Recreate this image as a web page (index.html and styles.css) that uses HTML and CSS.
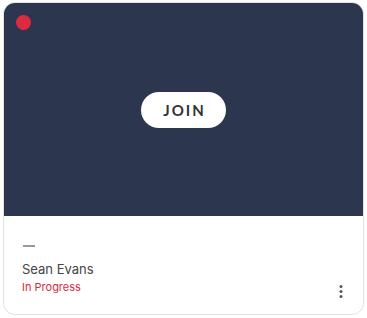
FILE: index.html
```html
<!DOCTYPE html>
<html>
<head>
<meta charset="utf-8">
<link rel="stylesheet" href="styles.css">
</head>
<body>
<div class="card">
  <div class="media">
    <span class="dot"></span>
    <button class="join">JOIN</button>
  </div>
  <div class="info">
    <div class="dash"></div>
    <div class="name">Sean Evans</div>
    <div class="row">
      <span class="status">In Progress</span>
      <svg class="kebab" width="4" height="13" viewBox="0 0 4 13"><circle cx="2" cy="1.5" r="1.5" fill="#555"/><circle cx="2" cy="6.5" r="1.5" fill="#555"/><circle cx="2" cy="11.5" r="1.5" fill="#555"/></svg>
    </div>
  </div>
</div>
</body>
</html>
```

FILE: styles.css
```css
html, body { margin: 0; padding: 0; background: #fff; }
body { font-family: Inter, "Noto Sans", sans-serif; }
.card {
  margin: 2px 0 0 3px;
  width: 361px;
  height: 313px;
  box-sizing: border-box;
  border: 1px solid #e2e2e2;
  border-radius: 12px;
  overflow: hidden;
  display: flex;
  flex-direction: column;
}
.media {
  position: relative;
  height: 213px;
  background: #2d364f;
  display: flex;
  align-items: center;
  justify-content: center;
}
.dot {
  position: absolute;
  left: 12px;
  top: 12px;
  width: 15px;
  height: 15px;
  border-radius: 50%;
  background: #dc2a3e;
}
.join {
  width: 85px;
  height: 36px;
  border: 0;
  border-radius: 18px;
  background: #fff;
  color: #333;
  font-family: Lato, Inter, sans-serif;
  font-weight: 700;
  font-size: 15px;
  letter-spacing: 2px;
  padding: 0 0 0 2px;
  margin-top: 1px;
}
.info {
  flex: 1;
  padding: 29px 20px 0 18px;
  display: flex;
  flex-direction: column;
}
.dash { width: 12px; height: 2px; background: #999; margin-left: 1px; }
.name { margin-top: 14px; font-size: 13px; color: #444; line-height: 16px; }
.row { display: flex; justify-content: space-between; align-items: flex-start; }
.status { margin-top: 3px; font-size: 11px; color: #dc2a3e; line-height: 14px; }
.kebab { margin-top: 8px; }
```
